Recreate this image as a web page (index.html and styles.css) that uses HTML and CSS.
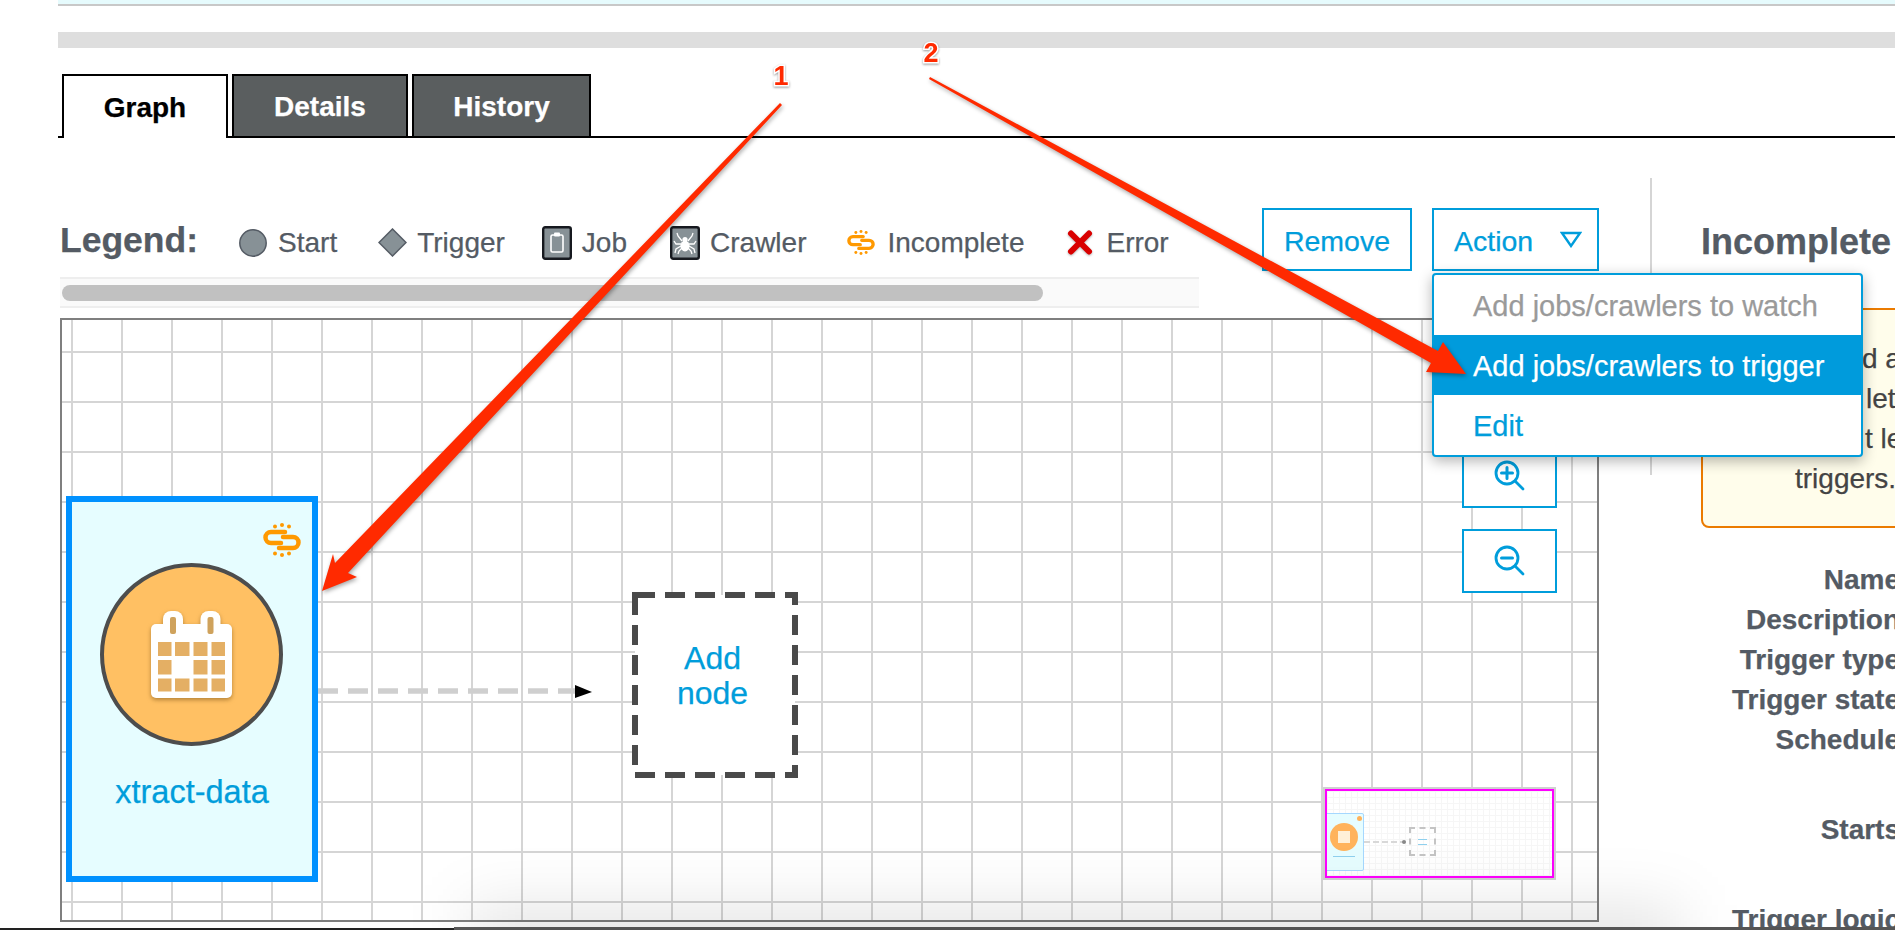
FILE: index.html
```html
<!DOCTYPE html>
<html>
  <head>
    <meta charset="UTF-8">
    <title>Trigger graph</title>
    <link rel="stylesheet" href="styles.css">
  </head>
  <body>
    <svg class="defs" width="0" height="0">
      <symbol id="chain" viewBox="0 0 38 34">
        <g fill="none" stroke="#ff9900" stroke-width="4.500" stroke-linecap="round">
          <path d="M22 9H8a5.500 5.500 0 0 0 0 11h10"/>
          <path d="M16 25h14a5.500 5.500 0 0 0 0-11H20"/>
        </g>
        <g fill="#ff9900">
          <circle cx="12" cy="3.500" r="2"/><circle cx="19" cy="2" r="2"/><circle cx="26" cy="3.500" r="2"/>
          <circle cx="12" cy="30.500" r="2"/><circle cx="19" cy="32" r="2"/><circle cx="26" cy="30.500" r="2"/>
        </g>
      </symbol>
    </svg>

    <div class="top-strip"></div>
    <div class="title-bar"></div>

    <div class="tabs">
      <div class="tab tab-active">Graph</div>
      <div class="tab">Details</div>
      <div class="tab">History</div>
    </div>

    <div class="content">
      <div class="graph-col">
        <div class="toolbar">
          <div class="legend-title">Legend:</div>
          <div class="legend-item">
            <svg width="28" height="28" viewBox="0 0 28 28"><circle cx="14" cy="14" r="13.200" fill="#879196" stroke="#545b64" stroke-width="1.500"/></svg>
            Start
          </div>
          <div class="legend-item legend-trigger">
            <svg width="29" height="29" viewBox="0 0 29 29"><path d="M14.500 1L28 14.500 14.500 28 1 14.500z" fill="#879196" stroke="#545b64" stroke-width="1.500"/></svg>
            Trigger
          </div>
          <div class="legend-item legend-job">
            <svg width="30" height="34" viewBox="0 0 30 34">
              <rect x="1.200" y="1.200" width="27.600" height="31.600" rx="2" fill="#879196" stroke="#16191f" stroke-width="2.400"/>
              <rect x="9" y="9" width="12" height="17" rx="1.500" fill="none" stroke="#fff" stroke-width="1.600"/>
              <rect x="12" y="6.500" width="6" height="4" rx="1" fill="#fff"/>
            </svg>
            Job
          </div>
          <div class="legend-item legend-crawler">
            <svg width="30" height="34" viewBox="0 0 30 34">
              <rect x="1.200" y="1.200" width="27.600" height="31.600" rx="2" fill="#879196" stroke="#16191f" stroke-width="2.400"/>
              <g stroke="#fff" stroke-width="1.300" fill="none">
                <path d="M12 15L8 10l-1-3M18 15l4-5 1-3M11 18H6L4 15M19 18h5l2-3M11 20l-5 3-1 4M19 20l5 3 1 4M12 22l-3 3-1 3M18 22l3 3 1 3"/>
              </g>
              <circle cx="15" cy="13.500" r="2.600" fill="#fff"/>
              <ellipse cx="15" cy="20" rx="4.600" ry="5.400" fill="#fff"/>
            </svg>
            Crawler
          </div>
          <div class="legend-item legend-incomplete">
            <svg width="28" height="25"><use href="#chain"/></svg>
            Incomplete
          </div>
          <div class="legend-item legend-error">
            <svg class="error-icon" width="26" height="25" viewBox="0 0 26 25"><path d="M4 3.500l18 18M22 3.500l-18 18" stroke="#d90000" stroke-width="6" stroke-linecap="round" fill="none"/></svg>
            Error
          </div>
          <div class="actions">
            <button class="btn btn-remove">Remove</button>
            <div class="action-wrap">
              <button class="btn btn-action">
                Action
                <svg width="22" height="17" viewBox="0 0 22 17"><path d="M2 2h18L11 15z" fill="none" stroke="#009ddb" stroke-width="2.400"/></svg>
              </button>
              <ul class="menu">
                <li class="menu-off">Add jobs/crawlers to watch</li>
                <li class="menu-on">Add jobs/crawlers to trigger</li>
                <li>Edit</li>
              </ul>
            </div>
          </div>
        </div>

        <div class="scroll-track"><div class="scroll-thumb"></div></div>

        <div class="canvas">
          <div class="node">
            <svg class="node-chain" width="38" height="34"><use href="#chain"/></svg>
            <div class="node-circle">
              <svg class="calendar" width="81" height="87" viewBox="0 0 81 87">
                <rect x="0" y="13" width="81" height="74" rx="5" fill="#fff"/>
                <rect x="12" y="0" width="20" height="30" rx="8" fill="#fff"/>
                <rect x="49.500" y="0" width="20" height="30" rx="8" fill="#fff"/>
                <rect x="19" y="6" width="6" height="17" rx="2" fill="#cfa25c"/>
                <rect x="56.500" y="6" width="6" height="17" rx="2" fill="#cfa25c"/>
                <g fill="#e4af64">
                  <rect x="7" y="31" width="13.500" height="14"/><rect x="24" y="31" width="14.500" height="14"/><rect x="42.500" y="31" width="14" height="14"/><rect x="60.500" y="31" width="13.500" height="14"/>
                  <rect x="7" y="49" width="13.500" height="14.500"/><rect x="42.500" y="49" width="14" height="14.500"/><rect x="60.500" y="49" width="13.500" height="14.500"/>
                  <rect x="7" y="67.500" width="13.500" height="13"/><rect x="24" y="67.500" width="14.500" height="13"/><rect x="42.500" y="67.500" width="14" height="13"/><rect x="60.500" y="67.500" width="13.500" height="13"/>
                </g>
              </svg>
            </div>
            <div class="node-name">xtract-data</div>
          </div>

          <svg class="edge" width="276" height="24" viewBox="0 0 276 24">
            <path d="M0 11H258" stroke="#cfcfcf" stroke-width="5.500" stroke-dasharray="20 10" fill="none"/>
            <path d="M257 5l17 7-17 6z" fill="#000"/>
          </svg>

          <div class="add-node">
            <svg class="add-border" width="166" height="186" viewBox="0 0 166 186">
              <rect x="3" y="3" width="160" height="180" fill="#fff" stroke="#4a4a4a" stroke-width="6" stroke-dasharray="20 10"/>
            </svg>
            <div class="add-label">Add<br>node</div>
          </div>

          <div class="zoom-btns">
            <div class="zoom-btn">
              <svg width="34" height="34" viewBox="0 0 34 34" fill="none" stroke="#009ddb" stroke-width="2.800" stroke-linecap="round">
                <circle cx="14" cy="13" r="11"/><path d="M22 21l8 8"/><path d="M8.500 13h11M14 7.500v11" stroke-width="3"/>
              </svg>
            </div>
            <div class="zoom-btn">
              <svg width="34" height="34" viewBox="0 0 34 34" fill="none" stroke="#009ddb" stroke-width="2.800" stroke-linecap="round">
                <circle cx="14" cy="13" r="11"/><path d="M22 21l8 8"/><path d="M8.500 13h11" stroke-width="3"/>
              </svg>
            </div>
          </div>

          <div class="minimap">
            <div class="mini-inner">
              <div class="mini-node"><span class="mini-circle"></span><span class="mini-name"></span></div>
              <div class="mini-edge"></div>
              <div class="mini-add"><span></span><span></span></div>
            </div>
          </div>
        </div>
      </div>

      <div class="side-rule"></div>

      <div class="side">
        <h2 class="side-title">Incomplete</h2>
        <div class="warn">
          <div class="warn-l1">d a</div>
          <div class="warn-l2">let</div>
          <div class="warn-l3">t le</div>
          <div class="warn-l4">triggers.</div>
        </div>
        <div class="props">
          <div class="prop">Name</div>
          <div class="prop">Description</div>
          <div class="prop">Trigger type</div>
          <div class="prop">Trigger state</div>
          <div class="prop prop-tall">Schedule</div>
          <div class="prop prop-tall">Starts</div>
          <div class="prop">Trigger logic</div>
        </div>
      </div>
    </div>

    <div class="window-shade"></div>
    <div class="bottom-edge"><div class="edge-left"></div><div class="edge-right"></div></div>

    <svg class="notes" width="1895" height="930" viewBox="0 0 1895 930">
      <g class="note-arrow">
        <path d="M780 103L782 105 348 573 357 577 322 591 333 554 335 563z"/>
        <path d="M930 77L929 79 1431 363 1426 372 1466 374 1443 342 1438 351z"/>
      </g>
      <text class="note-num" x="781" y="85" text-anchor="middle">1</text>
      <text class="note-num" x="931" y="62" text-anchor="middle">2</text>
    </svg>
  </body>
</html>
```

FILE: styles.css
```css
html, body
{
  margin: 0;
  height: 100%;
}
body
{
  position: relative;
  width: 1895px;
  height: 930px;
  overflow: hidden;
  background-color: white;
  font-family: "Liberation Sans", Helvetica, Arial, sans-serif;
  color: #545b64;
  -webkit-text-stroke: 0.25px;
}
.defs
{
  position: absolute;
}

.top-strip
{
  margin-left: 58px;
  height: 4px;
  background-color: #e6fbfd;
  border-bottom: 2px solid #c8c8c8;
}
.title-bar
{
  margin: 26px 0 0 58px;
  height: 16px;
  background-color: #dedede;
}

.tabs
{
  display: flex;
  gap: 4px;
  margin: 26px 0 0 58px;
  padding-left: 4px;
  height: 62px;
  border-bottom: 2px solid black;
}
.tab
{
  display: flex;
  align-items: center;
  justify-content: center;
  box-sizing: border-box;
  width: 176px;
  padding-top: 2px;
  height: 62px;
  border: 2px solid black;
  border-bottom: 0;
  background-color: #5a5e5f;
  color: white;
  font-size: 28px;
  font-weight: bold;
}
.tab-active
{
  width: 166px;
  height: 64px;
  background-color: white;
  color: black;
}
.tab:last-child
{
  width: 179px;
}

.content
{
  display: flex;
  align-items: flex-start;
  margin-left: 60px;
}
.graph-col
{
  flex: none;
  width: 1539px;
}

.toolbar
{
  display: flex;
  align-items: center;
  gap: 41px;
  margin-top: 70px;
  height: 63px;
}
.legend-title
{
  font-size: 35.5px;
  font-weight: bold;
  line-height: 40px;
}
.legend-item
{
  display: flex;
  align-items: center;
  gap: 11px;
  margin-top: 6px;
  font-size: 28px;
  line-height: 40px;
}
.legend-trigger
{
  gap: 10px;
}
.legend-job
{
  gap: 10px;
  margin-left: -4px;
}
.legend-crawler
{
  gap: 10px;
  margin-left: 2px;
}
.legend-incomplete
{
  gap: 12px;
}
.legend-error
{
  gap: 13px;
  margin-left: 2px;
}
.error-icon
{
  filter: drop-shadow(0 1px 1px rgba(0, 0, 0, 0.3));
}
.actions
{
  display: flex;
  gap: 20px;
  margin-left: auto;
}
.btn
{
  box-sizing: border-box;
  height: 63px;
  padding: 4px 0 0 0;
  border: 2px solid #009ddb;
  background-color: white;
  color: #009ddb;
  font-family: inherit;
  font-size: 28.5px;
  -webkit-text-stroke: 0.25px;
}
.btn-remove
{
  width: 150px;
}
.btn-action
{
  display: flex;
  align-items: center;
  justify-content: space-between;
  width: 167px;
  padding: 4px 15px 0 20px;
}
.btn-action svg
{
  margin-top: -4px;
}
.action-wrap
{
  position: relative;
}
.menu
{
  position: absolute;
  top: 65px;
  left: 0;
  z-index: 5;
  box-sizing: border-box;
  width: 431px;
  margin: 0;
  padding: 0;
  list-style: none;
  background-color: white;
  border: 2px solid #009ddb;
  border-radius: 4px;
  box-shadow: 0 4px 14px rgba(0, 0, 0, 0.3);
  color: #009ddb;
  font-size: 29px;
  white-space: nowrap;
}
.menu li
{
  height: 60px;
  padding-left: 39px;
  line-height: 63px;
}
.menu .menu-off
{
  color: #9a9a9a;
}
.menu .menu-on
{
  background-color: #009bdc;
  color: white;
}

.scroll-track
{
  box-sizing: border-box;
  width: 1139px;
  height: 31px;
  margin-top: 6px;
  padding: 6px 0 0 2px;
  background-color: #fafafa;
  border-top: 2px solid #eeeeee;
  border-bottom: 2px solid #eeeeee;
}
.scroll-thumb
{
  width: 981px;
  height: 16px;
  border-radius: 8px;
  background-color: #c1c1c1;
}

.canvas
{
  position: relative;
  box-sizing: border-box;
  height: 604px;
  margin-top: 10px;
  border: 2px solid #7f7f7f;
  background-color: white;
  background-image: linear-gradient(#d5d5d5 2px, transparent 2px), linear-gradient(90deg, #d5d5d5 2px, transparent 2px);
  background-size: 50px 50px;
  background-position: 0 31px, 9px 0;
}
.node
{
  position: absolute;
  left: 4px;
  top: 176px;
  display: flex;
  flex-direction: column;
  align-items: center;
  box-sizing: border-box;
  width: 252px;
  height: 386px;
  padding-top: 61px;
  border: 6px solid #0091ff;
  background-color: #e6fdff;
}
.node-chain
{
  position: absolute;
  top: 21px;
  right: 11px;
}
.node-circle
{
  display: flex;
  align-items: center;
  justify-content: center;
  box-sizing: border-box;
  width: 183px;
  height: 183px;
  margin-right: 2px;
  border: 4px solid #4d4d4d;
  border-radius: 50%;
  background-color: #ffc063;
}
.calendar
{
  filter: drop-shadow(0 2px 2px rgba(120, 80, 20, 0.55));
}
.node-name
{
  margin-top: 26px;
  font-size: 32.5px;
  line-height: 40px;
  color: #009ddb;
}
.edge
{
  position: absolute;
  left: 256px;
  top: 360px;
}
.add-node
{
  position: absolute;
  left: 570px;
  top: 272px;
  display: flex;
  align-items: center;
  justify-content: center;
  box-sizing: border-box;
  width: 166px;
  height: 186px;
  padding: 0 5px 18px 0;
}
.add-border
{
  position: absolute;
  left: 0;
  top: 0;
}
.add-label
{
  position: relative;
  font-size: 32px;
  line-height: 35px;
  text-align: center;
  color: #009ddb;
}
.zoom-btns
{
  position: absolute;
  left: 1400px;
  top: 124px;
  display: flex;
  flex-direction: column;
  gap: 21px;
}
.zoom-btn
{
  display: flex;
  align-items: center;
  justify-content: center;
  box-sizing: border-box;
  width: 95px;
  height: 64px;
  padding-top: 1px;
  border: 2px solid #009ddb;
  background-color: white;
}
.minimap
{
  position: absolute;
  left: 1261px;
  top: 467px;
  box-sizing: border-box;
  width: 233px;
  height: 93px;
  border: 2px solid #d0d0d0;
}
.mini-inner
{
  position: relative;
  box-sizing: border-box;
  height: 89px;
  overflow: hidden;
  border: 2px solid #ff00ff;
  background-color: white;
  background-image: linear-gradient(#f6f6f6 1px, transparent 1px), linear-gradient(90deg, #f6f6f6 1px, transparent 1px);
  background-size: 6px 6px;
}
.mini-node
{
  position: absolute;
  left: -2px;
  top: 22px;
  box-sizing: border-box;
  width: 39px;
  height: 58px;
  border: 1px solid #a5d8ff;
  border-radius: 2px;
  background-color: #e6fdff;
  filter: blur(0.6px);
}
.mini-node::after
{
  content: "";
  position: absolute;
  right: 1px;
  top: 2px;
  width: 5px;
  height: 5px;
  border-radius: 50%;
  background-color: #ffb35c;
}
.mini-circle
{
  position: absolute;
  left: 4px;
  top: 9px;
  width: 28px;
  height: 28px;
  border-radius: 50%;
  background-color: #ffb35c;
}
.mini-circle::after
{
  content: "";
  position: absolute;
  left: 8px;
  top: 8px;
  width: 12px;
  height: 12px;
  background-color: #fff0d8;
}
.mini-name
{
  position: absolute;
  left: 7px;
  top: 42px;
  width: 22px;
  height: 1px;
  background-color: #8fd0ee;
}
.mini-edge
{
  position: absolute;
  left: 37px;
  top: 50px;
  width: 42px;
  border-top: 2px dashed #d8d8d8;
  filter: blur(0.5px);
}
.mini-edge::after
{
  content: "";
  position: absolute;
  right: 0;
  top: -3px;
  width: 4px;
  height: 4px;
  border-radius: 50%;
  background-color: #888888;
}
.mini-add
{
  position: absolute;
  left: 82px;
  top: 36px;
  display: flex;
  flex-direction: column;
  align-items: center;
  justify-content: center;
  gap: 4px;
  box-sizing: border-box;
  width: 27px;
  height: 29px;
  border: 2px dashed #c4c4c4;
  filter: blur(0.6px);
}
.mini-add span
{
  width: 9px;
  height: 1px;
  background-color: #8fd0ee;
}

.side-rule
{
  flex: none;
  width: 2px;
  height: 297px;
  margin: 40px 0 0 51px;
  background-color: #d5d5d5;
}
.side
{
  flex: none;
  width: 260px;
  margin: 84px 0 0 49px;
}
.side-title
{
  margin: 0;
  font-size: 36px;
  line-height: 40px;
  white-space: nowrap;
}
.warn
{
  box-sizing: border-box;
  height: 220px;
  margin-top: 46px;
  padding-top: 29px;
  border: 2px solid #eb7b00;
  border-radius: 8px;
  background-color: #fffdeb;
  color: #444444;
  font-size: 28px;
  line-height: 40px;
  white-space: nowrap;
}
.warn-l1
{
  margin-left: 159px;
}
.warn-l2
{
  margin-left: 163px;
}
.warn-l3
{
  margin-left: 162px;
}
.warn-l4
{
  margin-left: 92px;
}
.props
{
  width: 199px;
  margin-top: 32px;
}
.prop
{
  font-size: 28px;
  font-weight: bold;
  line-height: 40px;
  text-align: right;
  white-space: nowrap;
}
.prop-tall
{
  margin-bottom: 50px;
}

/* screenshot leftovers: shadow of the window below, its top edge, and the red notes */
.window-shade
{
  position: absolute;
  left: 470px;
  top: 905px;
  width: 1210px;
  height: 70px;
  background-color: rgba(0, 0, 0, 0.1);
  filter: blur(30px);
  pointer-events: none;
}
.bottom-edge
{
  position: absolute;
  left: 0;
  right: 0;
  bottom: 0;
  display: flex;
  align-items: flex-end;
}
.edge-left
{
  width: 454px;
  height: 2px;
  background-color: #222222;
}
.edge-right
{
  flex: 1;
  height: 3px;
  background-color: #555555;
}
.notes
{
  position: absolute;
  left: 0;
  top: 0;
  z-index: 10;
  pointer-events: none;
}
.note-arrow
{
  fill: #ff2a00;
  filter: drop-shadow(1px 2px 2px rgba(0, 0, 0, 0.35));
}
.note-num
{
  font-size: 27px;
  font-weight: bold;
  fill: #ff2a00;
  stroke: white;
  stroke-width: 3px;
  paint-order: stroke;
  filter: drop-shadow(0 1px 1px rgba(0, 0, 0, 0.4));
}
```
